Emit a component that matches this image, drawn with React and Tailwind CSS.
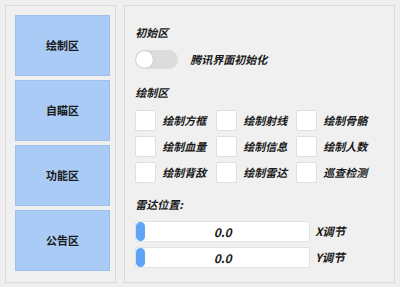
import React, { useState } from 'react';

const FONT = { fontFamily: '"Noto Sans CJK SC", "Noto Sans", sans-serif' };

const NAV = ['绘制区', '自瞄区', '功能区', '公告区'];

const CHECKS = [
  '绘制方框', '绘制射线', '绘制骨骼',
  '绘制血量', '绘制信息', '绘制人数',
  '绘制背敌', '绘制雷达', '巡查检测',
];

function Slider({ label }) {
  return (
    <div className="flex items-center gap-[5px]">
      <div className="relative w-[175px] h-[21px] bg-white border border-[#e2e2e2] rounded-[2px] flex items-center justify-center">
        <div className="absolute left-0 top-0 w-[9px] h-[19px] rounded-full bg-[#5ea4f8]" />
        <span className="text-[12px] italic font-bold text-[#1a1a1a] leading-none">0.0</span>
      </div>
      <span className="text-[11.5px] italic font-bold text-[#1a1a1a] leading-none">{label}</span>
    </div>
  );
}

export default function App() {
  const [checked, setChecked] = useState({});

  return (
    <div style={FONT} className="w-[400px] h-[287px] bg-[#efefef] flex gap-[8px] p-[5px]">
      {/* Left nav */}
      <div className="w-[112px] h-[278px] border border-[#dadada] bg-[#f0f0f0] pt-[9px] pl-[9px] flex flex-col gap-[4px]">
        {NAV.map((n) => (
          <div
            key={n}
            className="w-[95px] h-[61px] bg-[#a9cbf5] border border-[#9ebfea] flex items-center justify-center text-[11px] font-bold text-[#1a1a1a]"
          >
            {n}
          </div>
        ))}
      </div>

      {/* Right content */}
      <div className="w-[273px] h-[278px] border border-[#dadada] bg-[#f0f0f0] pt-[18px] pl-[10px] flex flex-col">
        <div className="h-[16px] text-[11px] italic font-bold text-[#1a1a1a] leading-[16px]">初始区</div>

        <div className="mt-[10px] flex items-center gap-[12px]">
          <div className="w-[43px] h-[19px] rounded-full bg-[#dcdcdc] flex items-center px-[1px]">
            <div className="w-[17px] h-[17px] rounded-full bg-white shadow-[0_0_1px_rgba(0,0,0,0.3)]" />
          </div>
          <span className="text-[11px] italic font-bold text-[#1a1a1a]">腾讯界面初始化</span>
        </div>

        <div className="mt-[15px] h-[16px] text-[11px] italic font-bold text-[#1a1a1a] leading-[16px]">绘制区</div>

        <div className="mt-[10px] grid grid-cols-[81px_80px_80px] gap-y-[5px]">
          {CHECKS.map((c) => (
            <label key={c} className="flex items-center gap-[6px] h-[21px] cursor-pointer">
              <span
                onClick={() => setChecked({ ...checked, [c]: !checked[c] })}
                className="w-[21px] h-[21px] bg-white border border-[#dedede] rounded-[2px] flex items-center justify-center text-[12px] text-[#5ea4f8]"
              >
                {checked[c] ? '✓' : ''}
              </span>
              <span className="text-[11px] italic font-bold text-[#1a1a1a]">{c}</span>
            </label>
          ))}
        </div>

        <div className="mt-[13px] h-[16px] text-[11px] italic font-bold text-[#1a1a1a] leading-[16px]">雷达位置:</div>

        <div className="mt-[9px] flex flex-col gap-[5px]">
          <Slider label="X调节" />
          <Slider label="Y调节" />
        </div>
      </div>
    </div>
  );
}
